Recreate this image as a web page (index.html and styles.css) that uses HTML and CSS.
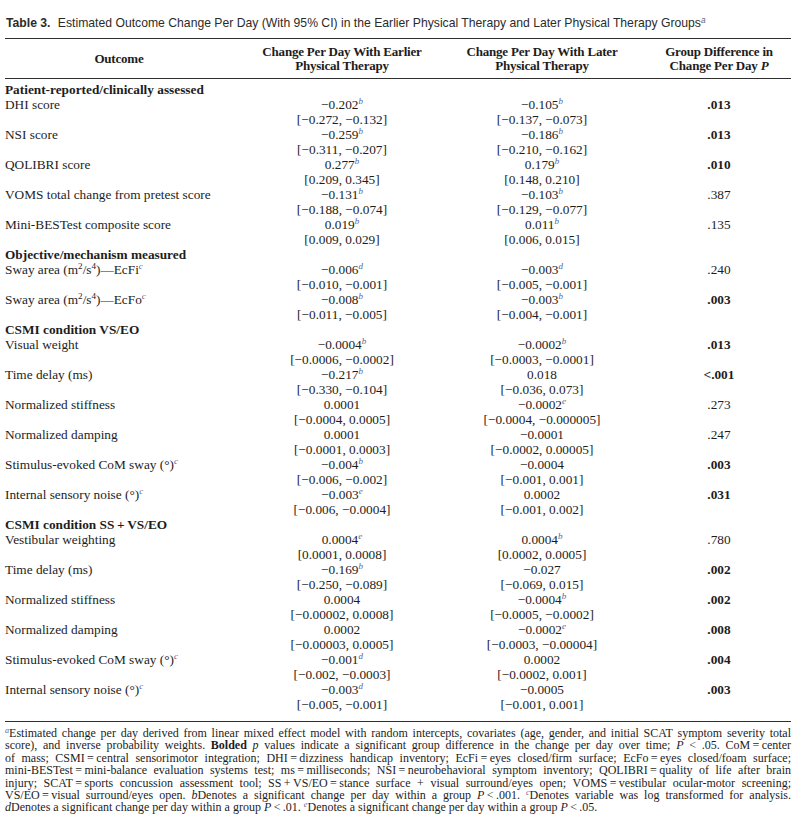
FILE: index.html
```html
<!DOCTYPE html>
<html lang="en">
<head>
    <meta charset="UTF-8">
    <meta name="viewport" content="width=device-width, initial-scale=1.0">
    <title>Table 3</title>
    <link rel="stylesheet" href="styles.css">
</head>
<body>
<div class="page">
    <p class="caption"><b>Table 3.</b> Estimated Outcome Change Per Day (With 95% CI) in the Earlier Physical Therapy and Later Physical Therapy Groups<sup class="fn">a</sup></p>

    <table class="results">
        <colgroup>
            <col class="c-outcome">
            <col class="c-early">
            <col class="c-late">
            <col class="c-diff">
        </colgroup>
        <thead>
            <tr>
                <th>Outcome</th>
                <th>Change Per Day With Earlier<br>Physical Therapy</th>
                <th>Change Per Day With Later<br>Physical Therapy</th>
                <th class="p">Group Difference in<br>Change Per Day <i>P</i></th>
            </tr>
        </thead>
        <tbody>
            <tr class="section first"><td colspan="4">Patient-reported/clinically assessed</td></tr>
            <tr>
                <td>DHI score</td>
                <td class="val">&minus;0.202<sup class="fn">b</sup><br>[&minus;0.272, &minus;0.132]</td>
                <td class="val">&minus;0.105<sup class="fn">b</sup><br>[&minus;0.137, &minus;0.073]</td>
                <td class="p sig">.013</td>
            </tr>
            <tr>
                <td>NSI score</td>
                <td class="val">&minus;0.259<sup class="fn">b</sup><br>[&minus;0.311, &minus;0.207]</td>
                <td class="val">&minus;0.186<sup class="fn">b</sup><br>[&minus;0.210, &minus;0.162]</td>
                <td class="p sig">.013</td>
            </tr>
            <tr>
                <td>QOLIBRI score</td>
                <td class="val">0.277<sup class="fn">b</sup><br>[0.209, 0.345]</td>
                <td class="val">0.179<sup class="fn">b</sup><br>[0.148, 0.210]</td>
                <td class="p sig">.010</td>
            </tr>
            <tr>
                <td>VOMS total change from pretest score</td>
                <td class="val">&minus;0.131<sup class="fn">b</sup><br>[&minus;0.188, &minus;0.074]</td>
                <td class="val">&minus;0.103<sup class="fn">b</sup><br>[&minus;0.129, &minus;0.077]</td>
                <td class="p">.387</td>
            </tr>
            <tr>
                <td>Mini-BESTest composite score</td>
                <td class="val">0.019<sup class="fn">b</sup><br>[0.009, 0.029]</td>
                <td class="val">0.011<sup class="fn">b</sup><br>[0.006, 0.015]</td>
                <td class="p">.135</td>
            </tr>

            <tr class="section"><td colspan="4">Objective/mechanism measured</td></tr>
            <tr>
                <td>Sway area (m<sup>2</sup>/s<sup>4</sup>)&mdash;EcFi<sup class="fn">c</sup></td>
                <td class="val">&minus;0.006<sup class="fn">d</sup><br>[&minus;0.010, &minus;0.001]</td>
                <td class="val">&minus;0.003<sup class="fn">d</sup><br>[&minus;0.005, &minus;0.001]</td>
                <td class="p">.240</td>
            </tr>
            <tr>
                <td>Sway area (m<sup>2</sup>/s<sup>4</sup>)&mdash;EcFo<sup class="fn">c</sup></td>
                <td class="val">&minus;0.008<sup class="fn">b</sup><br>[&minus;0.011, &minus;0.005]</td>
                <td class="val">&minus;0.003<sup class="fn">b</sup><br>[&minus;0.004, &minus;0.001]</td>
                <td class="p sig">.003</td>
            </tr>

            <tr class="section"><td colspan="4">CSMI condition VS/EO</td></tr>
            <tr>
                <td>Visual weight</td>
                <td class="val">&minus;0.0004<sup class="fn">b</sup><br>[&minus;0.0006, &minus;0.0002]</td>
                <td class="val">&minus;0.0002<sup class="fn">b</sup><br>[&minus;0.0003, &minus;0.0001]</td>
                <td class="p sig">.013</td>
            </tr>
            <tr>
                <td>Time delay (ms)</td>
                <td class="val">&minus;0.217<sup class="fn">b</sup><br>[&minus;0.330, &minus;0.104]</td>
                <td class="val">0.018<br>[&minus;0.036, 0.073]</td>
                <td class="p sig">&lt;.001</td>
            </tr>
            <tr>
                <td>Normalized stiffness</td>
                <td class="val">0.0001<br>[&minus;0.0004, 0.0005]</td>
                <td class="val">&minus;0.0002<sup class="fn">e</sup><br>[&minus;0.0004, &minus;0.000005]</td>
                <td class="p">.273</td>
            </tr>
            <tr>
                <td>Normalized damping</td>
                <td class="val">0.0001<br>[&minus;0.0001, 0.0003]</td>
                <td class="val">&minus;0.0001<br>[&minus;0.0002, 0.00005]</td>
                <td class="p">.247</td>
            </tr>
            <tr>
                <td>Stimulus-evoked CoM sway (&deg;)<sup class="fn">c</sup></td>
                <td class="val">&minus;0.004<sup class="fn">b</sup><br>[&minus;0.006, &minus;0.002]</td>
                <td class="val">&minus;0.0004<br>[&minus;0.001, 0.001]</td>
                <td class="p sig">.003</td>
            </tr>
            <tr>
                <td>Internal sensory noise (&deg;)<sup class="fn">c</sup></td>
                <td class="val">&minus;0.003<sup class="fn">e</sup><br>[&minus;0.006, &minus;0.0004]</td>
                <td class="val">0.0002<br>[&minus;0.001, 0.002]</td>
                <td class="p sig">.031</td>
            </tr>

            <tr class="section"><td colspan="4">CSMI condition SS&thinsp;+&thinsp;VS/EO</td></tr>
            <tr>
                <td>Vestibular weighting</td>
                <td class="val">0.0004<sup class="fn">e</sup><br>[0.0001, 0.0008]</td>
                <td class="val">0.0004<sup class="fn">b</sup><br>[0.0002, 0.0005]</td>
                <td class="p">.780</td>
            </tr>
            <tr>
                <td>Time delay (ms)</td>
                <td class="val">&minus;0.169<sup class="fn">b</sup><br>[&minus;0.250, &minus;0.089]</td>
                <td class="val">&minus;0.027<br>[&minus;0.069, 0.015]</td>
                <td class="p sig">.002</td>
            </tr>
            <tr>
                <td>Normalized stiffness</td>
                <td class="val">0.0004<br>[&minus;0.00002, 0.0008]</td>
                <td class="val">&minus;0.0004<sup class="fn">b</sup><br>[&minus;0.0005, &minus;0.0002]</td>
                <td class="p sig">.002</td>
            </tr>
            <tr>
                <td>Normalized damping</td>
                <td class="val">0.0002<br>[&minus;0.00003, 0.0005]</td>
                <td class="val">&minus;0.0002<sup class="fn">e</sup><br>[&minus;0.0003, &minus;0.00004]</td>
                <td class="p sig">.008</td>
            </tr>
            <tr>
                <td>Stimulus-evoked CoM sway (&deg;)<sup class="fn">c</sup></td>
                <td class="val">&minus;0.001<sup class="fn">d</sup><br>[&minus;0.002, &minus;0.0003]</td>
                <td class="val">0.0002<br>[&minus;0.0002, 0.001]</td>
                <td class="p sig">.004</td>
            </tr>
            <tr class="last">
                <td>Internal sensory noise (&deg;)<sup class="fn">c</sup></td>
                <td class="val">&minus;0.003<sup class="fn">d</sup><br>[&minus;0.005, &minus;0.001]</td>
                <td class="val">&minus;0.0005<br>[&minus;0.001, 0.001]</td>
                <td class="p sig">.003</td>
            </tr>
        </tbody>
    </table>

    <div class="notes">
        <span class="line"><sup class="fn">a</sup>Estimated change per day derived from linear mixed effect model with random intercepts, covariates (age, gender, and initial SCAT symptom severity total</span>
        <span class="line">score), and inverse probability weights. <b>Bolded</b> <i>p</i> values indicate a significant group difference in the change per day over time; <i>P</i> &lt; .05. CoM&thinsp;=&thinsp;center</span>
        <span class="line">of mass; CSMI&thinsp;=&thinsp;central sensorimotor integration; DHI&thinsp;=&thinsp;dizziness handicap inventory; EcFi&thinsp;=&thinsp;eyes closed/firm surface; EcFo&thinsp;=&thinsp;eyes closed/foam surface;</span>
        <span class="line">mini-BESTest&thinsp;=&thinsp;mini-balance evaluation systems test; ms&thinsp;=&thinsp;milliseconds; NSI&thinsp;=&thinsp;neurobehavioral symptom inventory; QOLIBRI&thinsp;=&thinsp;quality of life after brain</span>
        <span class="line">injury; SCAT&thinsp;=&thinsp;sports concussion assessment tool; SS&thinsp;+&thinsp;VS/EO&thinsp;=&thinsp;stance surface + visual surround/eyes open; VOMS&thinsp;=&thinsp;vestibular ocular-motor screening;</span>
        <span class="line">VS/EO&thinsp;=&thinsp;visual surround/eyes open. <i>b</i>Denotes a significant change per day within a group <i>P</i>&thinsp;&lt;&thinsp;.001. <sup class="fn">c</sup>Denotes variable was log transformed for analysis.</span>
        <span class="line end"><i>d</i>Denotes a significant change per day within a group <i>P</i>&thinsp;&lt;&thinsp;.01. <sup class="fn">e</sup>Denotes a significant change per day within a group <i>P</i>&thinsp;&lt;&thinsp;.05.</span>
    </div>
</div>
</body>
</html>
```

FILE: styles.css
```css
body {
    margin: 0;
    background-color: #fff;
    color: #1d1d1d;
}

.page {
    width: 786px;
    margin-left: 5px;
    padding-top: 15px;
}

.caption {
    font-family: 'Liberation Sans', Arial, sans-serif;
    font-size: 12.2px;
    line-height: 16px;
    color: #2b2b2b;
    margin: 0 0 7px 1px;
}

.caption b {
    margin-right: 4px;
}

/* raised without growing the line box */
sup {
    font-size: 0.68em;
    line-height: 0;
    vertical-align: baseline;
    position: relative;
    top: -0.5em;
}

.fn {
    font-style: italic;
    color: #5a6494;
}

.results {
    width: 100%;
    border-collapse: collapse;
    table-layout: fixed;
    font-family: 'Liberation Serif', 'Times New Roman', serif;
    font-size: 13.3px;
    line-height: 15px;
}

.c-outcome { width: 228px; }
.c-early { width: 218px; }
.c-late { width: 182px; }
.c-diff { width: 158px; }

.results th {
    font-size: 13px;
    line-height: 14px;
    font-weight: bold;
    letter-spacing: -0.2px;
    text-align: center;
    padding: 6px 0 5px;
    border-top: 1.5px solid #2e2e2e;
    border-bottom: 1.5px solid #2e2e2e;
}

.results td {
    padding: 0;
    vertical-align: top;
}

.results .val {
    text-align: center;
}

.results .p {
    text-align: center;
    padding-left: 14px;
}

.results .sig {
    font-weight: bold;
}

.section td {
    font-weight: bold;
}

.section.first td {
    padding-top: 3px;
}

.last td {
    padding-bottom: 9px;
    border-bottom: 1.5px solid #2e2e2e;
}

.notes {
    margin-top: 5px;
    font-family: 'Liberation Serif', 'Times New Roman', serif;
    font-size: 12px;
    line-height: 12.4px;
}

.notes .line {
    display: block;
    text-align: justify;
    text-align-last: justify;
    word-spacing: -1.2px;
}

.notes .line.end {
    text-align-last: left;
    word-spacing: 0;
}
```
